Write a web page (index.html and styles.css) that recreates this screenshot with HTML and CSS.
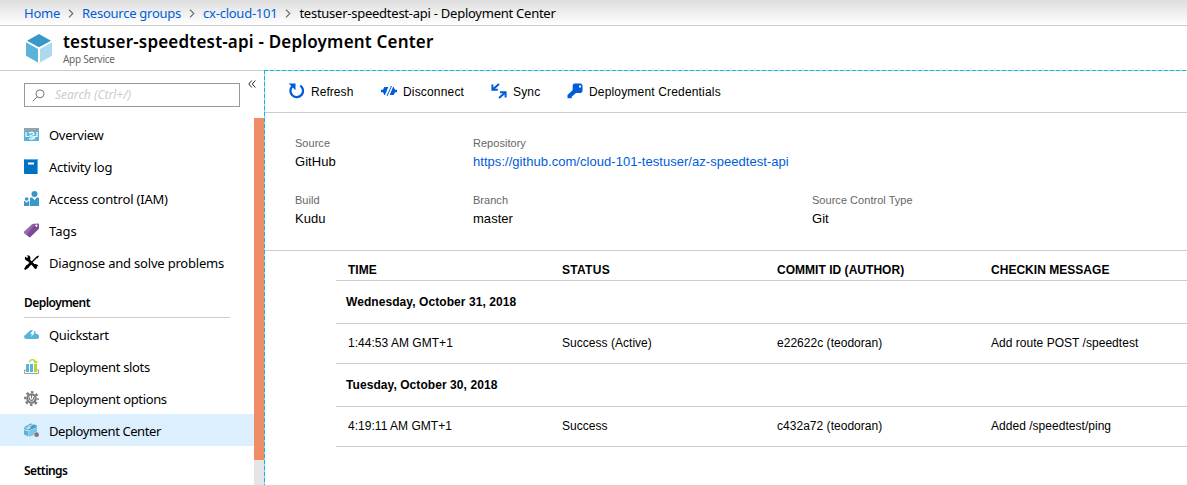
FILE: index.html
```html
<!DOCTYPE html>
<html lang="en">
<head>
<meta charset="utf-8">
<title>testuser-speedtest-api - Deployment Center</title>
<link rel="stylesheet" href="styles.css">
</head>
<body>
<nav class="crumbs">
  <a>Home</a><svg class="chev" viewBox="0 0 6 9"><path d="M1 .7 4.8 4.5 1 8.3"/></svg>
  <a>Resource groups</a><svg class="chev" viewBox="0 0 6 9"><path d="M1 .7 4.8 4.5 1 8.3"/></svg>
  <a>cx-cloud-101</a><svg class="chev" viewBox="0 0 6 9"><path d="M1 .7 4.8 4.5 1 8.3"/></svg>
  <span>testuser-speedtest-api - Deployment Center</span>
</nav>
<header class="head">
  <svg class="cube" viewBox="0 0 26 29"><path fill="#3999c6" d="M13 0 25 6.700 13 13.300 1 6.700z"/><path fill="#59b4d9" d="M0 8.300 12 15v13.500L0 21.800z"/><path fill="#acd9ed" d="M26 8.300 14 15v13.500l12-6.700z"/></svg>
  <div><h1>testuser-speedtest-api - Deployment Center</h1><p>App Service</p></div>
</header>
<main class="body">
  <aside class="side">
    <div class="searchrow">
      <div class="search"><svg viewBox="0 0 13 13"><circle cx="8" cy="4.800" r="4"/><path d="M5.200 7.800.7 12.300"/></svg><span>Search (Ctrl+/)</span></div>
      <svg class="collapse" viewBox="0 0 8 8"><path d="M3.800.5.8 4l3 3.500M7.300.5l-3 3.500 3 3.500"/></svg>
    </div>
    <div class="menuwrap">
      <div class="menu">
        <div class="item"><svg class="ico" viewBox="0 0 15 15"><path fill="#59b4d9" d="M0 1h15v13H0z"/><path fill="#a0a1a2" d="M0 1h15v2.500H0z"/><path fill="none" stroke="#fff" stroke-width="1.200" d="M2 5v4.500h3M13 5v4.500h-2M5 6.500c2-2 5-1 5 .5S6 7.500 6 9s3 1.500 5 0M5 11.500c2 1.200 4 1 6-1"/></svg><span>Overview</span></div>
        <div class="item"><svg class="ico" viewBox="0 0 15 15"><path fill="#0072c6" d="M0 1Q0 0 1 0h12v15H1q-1 0-1-1z"/><path fill="#59b4d9" d="M13 0h1v15h-1zM1 0h12v1H1z"/><path fill="#fff" d="M4 3.500h6v2H4z"/></svg><span>Activity log</span></div>
        <div class="item"><svg class="ico" viewBox="0 0 15 15"><g fill="#3999c6"><circle cx="10.500" cy="3" r="3"/><circle cx="2.700" cy="8" r="1.800"/><path d="M6 15V7.500q0-1 1-1h1.300l2.200 2.800 2.200-2.800H14q1 0 1 1V15zM0 15v-4q0-1 1-1l1.700 1.800L4.400 10q1 0 1 1v4z"/></g></svg><span class="ls-mid">Access control (IAM)</span></div>
        <div class="item"><svg class="ico" viewBox="0 0 15 15"><path fill="#804998" d="m0 9 8.500-8L14 .5q1 0 1 1v4.200L6.500 14q-.8.700-1.500 0L0 9.700z"/><path fill="#9768ab" d="m0 9 8.500-8 2.500-.2-8.500 11.400L0 9.700z"/><circle cx="12.400" cy="2.700" r="1.100" fill="#fff"/></svg><span class="ls-none">Tags</span></div>
        <div class="item"><svg class="ico" viewBox="0 0 15 15"><path fill="none" stroke="#000" stroke-width="2.500" d="m4 4.500 8.500 8.500M2.500 12.500 7 8"/><path fill="none" stroke="#000" stroke-width="1.500" d="m7 8 6-6"/><path d="M1 1.500 3 3l1-1L3 .2Q6 0 6.500 2.500L6 5.500 3.500 6Q.2 5.500 1 1.500zM12 2l2.500-1.500.5.500-1.500 2.500zM10.500 9Q14 8.500 14.500 11.500l-1-.5-1.500 1.500.7 1.500Q9.500 14 9.500 11zM0 14l2.500-4L5 12l-3.500 3Z"/></svg><span class="ls-mid">Diagnose and solve problems</span></div>
        <h2>Deployment</h2>
        <div class="item"><svg class="ico" viewBox="0 0 15 15"><path fill="#59b4d9" d="M2.500 12Q0 12 0 9.800 0 8 2.200 7.600 2.500 5.500 4.500 5.200 5.500 3 8 3q3.500.2 4 3.700 3 .3 3 2.700 0 2.600-2.500 2.600z"/><path fill="#fff" d="M9 3 6.300 7H8L7 10l4-4.500H9.300L11 3z"/></svg><span class="ls-wide">Quickstart</span></div>
        <div class="item"><svg class="ico" viewBox="0 0 15 15"><path fill="none" stroke="#a0a1a2" d="M2 11H.5v3.500h14V11H13"/><path fill="#59b4d9" d="M2 5h3v8H2zM6 5h3v8H6z"/><path fill="#b8d432" d="M10 5h3v8h-3z"/><path fill="none" stroke="#b8d432" stroke-width="1.200" d="M5.500 3.500Q6 .7 8.500.7T11.800 4M9.800 2.500l2 1.700 1.500-2"/></svg><span class="ls-wide">Deployment slots</span></div>
        <div class="item"><svg class="ico" viewBox="0 0 15 15"><circle cx="7.500" cy="7.500" r="4.200" fill="none" stroke="#7a7a7a" stroke-width="2.200"/><circle cx="7.500" cy="7.500" r="6.300" fill="none" stroke="#7a7a7a" stroke-width="2.200" stroke-dasharray="2.500 2.448" stroke-dashoffset="1.250"/><path fill="none" stroke="#7a7a7a" stroke-width="1.100" d="M7.500 4v3.500M5.500 6.300a2.200 2.200 0 1 0 4 0"/></svg><span class="ls-wide">Deployment options</span></div>
        <div class="item active"><svg class="ico" viewBox="0 0 15 15"><path fill="#3999c6" d="M0 4.200 7 .5l2 .7L3 5zM5.500 4.200 10 1.500l3 .8-5 3z"/><path fill="#acd9ed" d="m1.500 4.300 6-3 1 .3L3.500 5z"/><path fill="#59b4d9" d="M0 4.700 4.500 6v1.300L0 6.200zM0 7l4.500 1.300v5.200L0 11.500z"/><path fill="#3999c6" d="m4.500 6 8.500-3v1.200L4.500 7.500z"/><path fill="#7ec5e2" d="m5 7.700 8-3.200v4.200q-2.800 0-3.500 3.500L5 13.700z"/><circle cx="12.600" cy="11.700" r="2.400" fill="#7a7a7a"/></svg><span class="ls-tight">Deployment Center</span></div>
        <h2 class="last">Settings</h2>
      </div>
      <div class="track"><div class="thumb"></div></div>
    </div>
  </aside>
  <section class="pane">
    <div class="tools">
      <div class="tool t1"><svg viewBox="0 0 16 16"><path fill="none" stroke="#015cda" stroke-width="2.300" d="M12.300 2.600A6.300 6.300 0 1 1 4.300 3.300"/><path fill="#015cda" d="M.7.500h6.800v6.700z"/></svg><span>Refresh</span></div>
      <div class="tool t2"><svg viewBox="0 0 16 16"><path fill="#015cda" d="M0 6.800h2L3.300 4h4L4 12h-.7L2 9.200H0zM16 6.800h-2L12.700 4H12L8.700 12h4L14 9.200h2zM10 3h1L6.500 13h-1z"/></svg><span>Disconnect</span></div>
      <div class="tool t3"><svg viewBox="0 0 16 16"><path fill="none" stroke="#015cda" stroke-width="2" d="M8 1 2 6.200M1.400 1.500v5.200h5.400M8 15l6-5.200M9 9.300h5.600v5.200"/></svg><span>Sync</span></div>
      <div class="tool t4"><svg viewBox="0 0 16 16"><path fill="#015cda" fill-rule="evenodd" d="M7 .5h7l1.500 1.500v6.500L14 10H9l-4.300 3.800v1.500H.5v-3.200L5.700 7V2zM12 2.500h2v2h-2z"/></svg><span>Deployment Credentials</span></div>
    </div>
    <div class="info">
      <div><label>Source</label><b>GitHub</b></div>
      <div><label>Repository</label><b class="link">https://github.com/cloud-101-testuser/az-speedtest-api</b></div>
      <div></div>
      <div><label>Build</label><b>Kudu</b></div>
      <div><label>Branch</label><b>master</b></div>
      <div><label>Source Control Type</label><b>Git</b></div>
    </div>
    <div class="table">
      <div class="row th"><span>TIME</span><span class="status">STATUS</span><span>COMMIT ID (AUTHOR)</span><span>CHECKIN MESSAGE</span></div>
      <div class="day"><span>Wednesday, October 31, 2018</span></div>
      <div class="row"><span>1:44:53 AM GMT+1</span><span>Success (Active)</span><span>e22622c (teodoran)</span><span>Add route POST /speedtest</span></div>
      <div class="day"><span>Tuesday, October 30, 2018</span></div>
      <div class="row"><span>4:19:11 AM GMT+1</span><span>Success</span><span>c432a72 (teodoran)</span><span>Added /speedtest/ping</span></div>
    </div>
  </section>
</main>
</body>
</html>
```
FILE: styles.css
```css
* { box-sizing: border-box; }
body { margin: 0; width: 1187px; height: 485px; overflow: hidden; background: #fff; color: #000; font: 13px/18px "Noto Sans", "Open Sans", sans-serif; }
h1, h2, p { margin: 0; }
span, a, h1, label, b { white-space: nowrap; }

.crumbs { display: flex; align-items: center; height: 26px; padding: 1px 0 0 24px; border-bottom: 1px solid #ccc; background: linear-gradient(#dedede, #fff); letter-spacing: -.25px; }
.crumbs a { color: #015cda; }
.chev { width: 6px; height: 9px; margin: 0 8px; fill: none; stroke: #666; stroke-width: 1.1; }

.head { display: flex; height: 45px; padding: 8px 0 0 26px; border-bottom: 1px solid #ccc; }
.cube { width: 26px; height: 29px; margin-right: 11px; }
.head h1 { margin-top: -1px; font-size: 17px; line-height: 18px; font-weight: 600; letter-spacing: .19px; }
.head p { font-size: 10px; line-height: 13px; color: #666; margin-top: 2px; letter-spacing: -.28px; }

.body { display: flex; height: 415px; margin-top: -1px; }
.side { width: 264px; padding-top: 1px; border-top: 1px solid #ccc; display: flex; flex-direction: column; }
.searchrow { display: flex; flex: none; height: 46px; padding: 11px 0 0 24px; }
.search { display: flex; align-items: center; width: 216px; height: 24px; padding-left: 7px; border: 1px solid #999; }
.search svg { width: 13px; height: 13px; fill: none; stroke: #777; }
.search span { margin-left: 10px; font-size: 12px; font-style: italic; color: #ccc; }
.collapse { width: 8px; height: 8px; margin: -3px 0 0 8px; fill: none; stroke: #222; }
.menuwrap { display: flex; flex: 1; min-height: 0; }
.menu { width: 254px; }
.item { display: flex; align-items: center; height: 32px; padding-left: 24px; }
.item span { margin: 2px 0 0 10px; letter-spacing: -.28px; }
.item .ls-none { letter-spacing: 0; }
.item .ls-mid { letter-spacing: -.2px; }
.item .ls-wide { letter-spacing: -.35px; }
.item .ls-tight { letter-spacing: -.42px; }
.ico { width: 15px; height: 15px; }
.active { background: #dbefff; }
.menu h2 { height: 40px; margin: 0 24px; padding-top: 16px; border-bottom: 1px solid #ccc; font-size: 12px; line-height: 18px; font-weight: 600; letter-spacing: -.55px; }
.menu .last { border: 0; }
.track { width: 10px; background: #e5e5e5; }
.thumb { height: 342px; background: #ee8c66; }

.pane { flex: 1; font-family: "Liberation Sans", Arial, sans-serif; padding: 1px 0 0 1px; background: repeating-linear-gradient(90deg, #00bcf2 0 4px, #ccc 4px 6px) 0 0 / 100% 1px no-repeat, repeating-linear-gradient(#00bcf2 0 4px, #ccc 4px 6px) 0 0 / 1px 100% no-repeat; }
.tools { display: flex; height: 42px; border-bottom: 1px solid #ccc; padding-left: 23px; font-size: 12px; letter-spacing: .17px; }
.tool { display: flex; align-items: center; }
.tool svg { width: 16px; height: 16px; margin-top: -1px; }
.tool span { margin-left: 6px; }
.t1 { width: 93px; }
.t1 span { margin-left: 7px; letter-spacing: .05px; }
.t2 { width: 110px; }
.t3 { width: 76px; }

.info { display: grid; grid-template-columns: 178px 339px 1fr; grid-auto-rows: 57px; height: 138px; padding: 22px 0 0 30px; border-bottom: 1px solid #ccc; }
.info label { display: block; font-size: 11px; line-height: 16px; color: #666; letter-spacing: .03px; }
.info b { display: block; margin-top: 2px; font-size: 13px; line-height: 18px; font-weight: 400; letter-spacing: .04px; }
.info .link { color: #015cda; }

.table { margin-left: 71px; font-size: 12px; }
.row { display: grid; grid-template-columns: 214px 215px 214px 1fr; align-items: center; height: 40px; padding: 0 0 2px 12px; border-bottom: 1px solid #ccc; letter-spacing: .03px; }
.th { height: 30px; padding: 8px 0 0 12px; font-weight: 700; }
.th .status { letter-spacing: .3px; }
.day { display: flex; align-items: center; height: 43px; padding-left: 10px; border-bottom: 1px solid #ccc; font-weight: 700; letter-spacing: .07px; }
```
